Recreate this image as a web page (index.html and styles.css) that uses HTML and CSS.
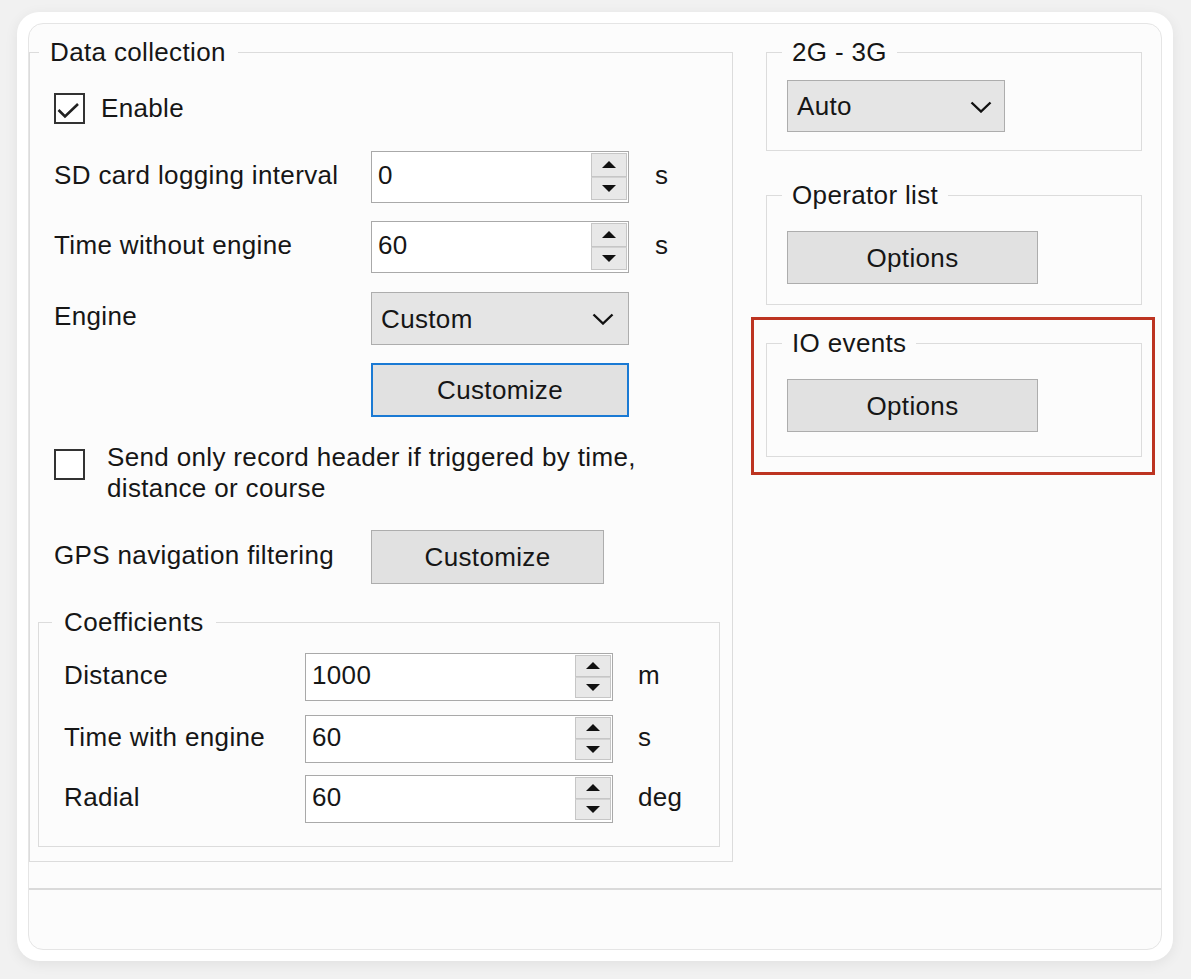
FILE: index.html
```html
<!DOCTYPE html>
<html>
<head>
<meta charset="utf-8">
<title>Data collection</title>
<link rel="stylesheet" href="styles.css">
</head>
<body>
<div class="page">
  <div class="card">
    <div class="panel">
      <div class="content">
        <fieldset class="group dc">
          <legend>Data collection</legend>
          <div class="dc-body">
            <div class="row enable-row">
              <svg class="check" width="31" height="31" viewBox="0 0 31 31"><rect x="1" y="1" width="29" height="29" fill="#fff" stroke="#333" stroke-width="2"/><polyline points="4.5,17 11,23.5 24,11" fill="none" stroke="#222" stroke-width="2.6"/></svg>
              <span class="enable-label">Enable</span>
            </div>
            <div class="row field-row sd-row">
              <span class="label">SD card logging interval</span>
              <div class="spin">
                <span class="spin-value">0</span>
                <span class="spin-btns"><span class="spin-btn"><span class="tri-up"></span></span><span class="spin-btn"><span class="tri-down"></span></span></span>
              </div>
              <span class="unit">s</span>
            </div>
            <div class="row field-row twe-row">
              <span class="label">Time without engine</span>
              <div class="spin">
                <span class="spin-value">60</span>
                <span class="spin-btns"><span class="spin-btn"><span class="tri-up"></span></span><span class="spin-btn"><span class="tri-down"></span></span></span>
              </div>
              <span class="unit">s</span>
            </div>
            <div class="row field-row engine-row">
              <span class="label">Engine</span>
              <div class="select">
                <span>Custom</span>
                <svg width="22" height="12" viewBox="0 0 22 12"><polyline points="1.5,1.5 11,10.5 20.5,1.5" fill="none" stroke="#111" stroke-width="2.4"/></svg>
              </div>
            </div>
            <div class="row field-row cust-row">
              <div class="btn btn-focus">Customize</div>
            </div>
            <div class="row send-row">
              <svg class="check send-check" width="31" height="31" viewBox="0 0 31 31"><rect x="1" y="1" width="29" height="29" fill="#fff" stroke="#333" stroke-width="2"/></svg>
              <span class="send-text">Send only record header if triggered by time, distance or course</span>
            </div>
            <div class="row field-row gps-row">
              <span class="label">GPS navigation filtering</span>
              <div class="btn btn-gps">Customize</div>
            </div>
            <fieldset class="group coef">
              <legend>Coefficients</legend>
              <div class="coef-body">
                <div class="row coef-row">
                  <span class="label">Distance</span>
                  <div class="spin spin-sm">
                    <span class="spin-value">1000</span>
                    <span class="spin-btns"><span class="spin-btn"><span class="tri-up"></span></span><span class="spin-btn"><span class="tri-down"></span></span></span>
                  </div>
                  <span class="unit">m</span>
                </div>
                <div class="row coef-row twe2-row">
                  <span class="label">Time with engine</span>
                  <div class="spin spin-sm">
                    <span class="spin-value">60</span>
                    <span class="spin-btns"><span class="spin-btn"><span class="tri-up"></span></span><span class="spin-btn"><span class="tri-down"></span></span></span>
                  </div>
                  <span class="unit">s</span>
                </div>
                <div class="row coef-row rad-row">
                  <span class="label">Radial</span>
                  <div class="spin spin-sm">
                    <span class="spin-value">60</span>
                    <span class="spin-btns"><span class="spin-btn"><span class="tri-up"></span></span><span class="spin-btn"><span class="tri-down"></span></span></span>
                  </div>
                  <span class="unit">deg</span>
                </div>
              </div>
            </fieldset>
          </div>
        </fieldset>

        <div class="right">
          <fieldset class="group net">
            <legend>2G - 3G</legend>
            <div class="net-body">
              <div class="select select-auto">
                <span>Auto</span>
                <svg width="22" height="12" viewBox="0 0 22 12"><polyline points="1.5,1.5 11,10.5 20.5,1.5" fill="none" stroke="#111" stroke-width="2.4"/></svg>
              </div>
            </div>
          </fieldset>
          <fieldset class="group op">
            <legend>Operator list</legend>
            <div class="op-body">
              <div class="btn btn-opt">Options</div>
            </div>
          </fieldset>
          <div class="highlight">
            <fieldset class="group io">
              <legend>IO events</legend>
              <div class="io-body">
                <div class="btn btn-opt">Options</div>
              </div>
            </fieldset>
          </div>
        </div>
      </div>
      <div class="footer"></div>
    </div>
  </div>
</div>
</body>
</html>
```

FILE: styles.css
```css
* { box-sizing: border-box; }
html, body { margin: 0; padding: 0; }
body {
  width: 1191px;
  height: 979px;
  overflow: hidden;
  background: #f1f1f1;
  font-family: "Liberation Sans", Arial, sans-serif;
  font-size: 26px;
  line-height: 30px;
  letter-spacing: 0.35px;
  color: #161616;
}
.page { padding: 12px 18px 0 17px; }
.card {
  width: 1156px;
  height: 949px;
  background: #ffffff;
  border-radius: 22px;
  box-shadow: 0 3px 14px rgba(0, 0, 0, 0.07);
  padding: 11px;
}
.panel {
  height: 927px;
  background: #fcfcfc;
  border: 1px solid #e5e5e5;
  border-radius: 15px;
  display: flex;
  flex-direction: column;
  overflow: hidden;
}
.content {
  flex: 1;
  display: flex;
  align-items: flex-start;
  gap: 33px;
  padding: 13px 19px 0 0;
}
.footer {
  height: 61px;
  flex: none;
  border-top: 2px solid #dadada;
}

/* group boxes */
.group {
  margin: 0;
  padding: 0;
  min-width: 0;
  border: 1px solid #dcdcdc;
}
.group > legend {
  margin-left: 15px;
  padding: 0 10px;
  line-height: 30px;
}
.dc { width: 704px; }
.dc > legend { margin-left: 9px; padding: 0 12px 0 11px; }
.dc-body { padding: 0 12px 14px 8px; }

.row { display: flex; align-items: center; }
.check { display: block; flex: none; }

.enable-row { margin-top: 25px; height: 32px; padding-left: 16px; }
.enable-label { margin-left: 16px; }

.field-row { padding-left: 16px; }
.field-row .label { width: 317px; flex: none; padding-bottom: 5px; }
.unit { margin-left: 26px; padding-bottom: 5px; }

.sd-row { margin-top: 27px; }
.twe-row { margin-top: 18px; }
.engine-row { margin-top: 19px; }
.cust-row { margin-top: 18px; }
.send-row { margin-top: 25px; align-items: flex-start; padding-left: 16px; line-height: 31px; }
.send-check { margin-top: 7px; }
.send-text { margin-left: 22px; max-width: 580px; }
.gps-row { margin-top: 26px; }

/* spin box */
.spin {
  width: 258px;
  height: 52px;
  flex: none;
  display: flex;
  background: #ffffff;
  border: 1px solid #a9a9a9;
  padding: 1px 1px 2px 0;
}
.spin-value { flex: 1; align-self: center; padding-left: 6px; padding-bottom: 4px; }
.spin-btns { width: 36px; display: flex; flex-direction: column; }
.spin-btn {
  flex: 1;
  display: flex;
  align-items: center;
  justify-content: center;
  background: #e8e8e8;
  border: 1px solid #c6c6c6;
}
.spin-btn + .spin-btn { border-top-color: #d2d2d2; }
.tri-up {
  width: 0; height: 0;
  border-left: 7px solid transparent;
  border-right: 7px solid transparent;
  border-bottom: 7px solid #111;
}
.tri-down {
  width: 0; height: 0;
  border-left: 7px solid transparent;
  border-right: 7px solid transparent;
  border-top: 7px solid #111;
}

/* select */
.select {
  width: 258px;
  height: 53px;
  flex: none;
  display: flex;
  align-items: center;
  justify-content: space-between;
  background: #e5e5e5;
  border: 1px solid #adadad;
  padding: 0 14px 0 9px;
}
.select svg { display: block; margin-top: 1px; }
.select-auto { width: 218px; height: 52px; padding-right: 12px; }

/* buttons */
.btn {
  display: flex;
  align-items: center;
  justify-content: center;
  background: #e1e1e1;
  border: 1px solid #adadad;
  flex: none;
}
.btn-focus {
  width: 258px;
  height: 54px;
  margin-left: 317px;
  border: 2px solid #1a7ad4;
}
.btn-gps { width: 233px; height: 54px; }
.btn-opt { width: 251px; height: 53px; }

/* coefficients */
.coef { margin-top: 23px; }
.coef > legend { margin-left: 13px; padding: 0 12px; }
.coef-body { padding: 16px 0 23px 25px; }
.coef-row .label { width: 241px; flex: none; padding-bottom: 5px; }
.spin-sm { width: 308px; height: 48px; }
.coef-row .unit { margin-left: 25px; }
.twe2-row { margin-top: 14px; }
.rad-row { margin-top: 12px; }

/* right column */
.right { width: 376px; flex: none; display: flex; flex-direction: column; }
.net-body { padding: 13px 0 18px 20px; }
.op { margin-top: 29px; }
.op-body { padding: 21px 0 20px 20px; }
.io-body { padding: 21px 0 24px 20px; }
.highlight {
  margin: 12px -13px 0 -15px;
  border: 3px solid #bd3421;
  padding: 8px 10px 15px 12px;
}
```
